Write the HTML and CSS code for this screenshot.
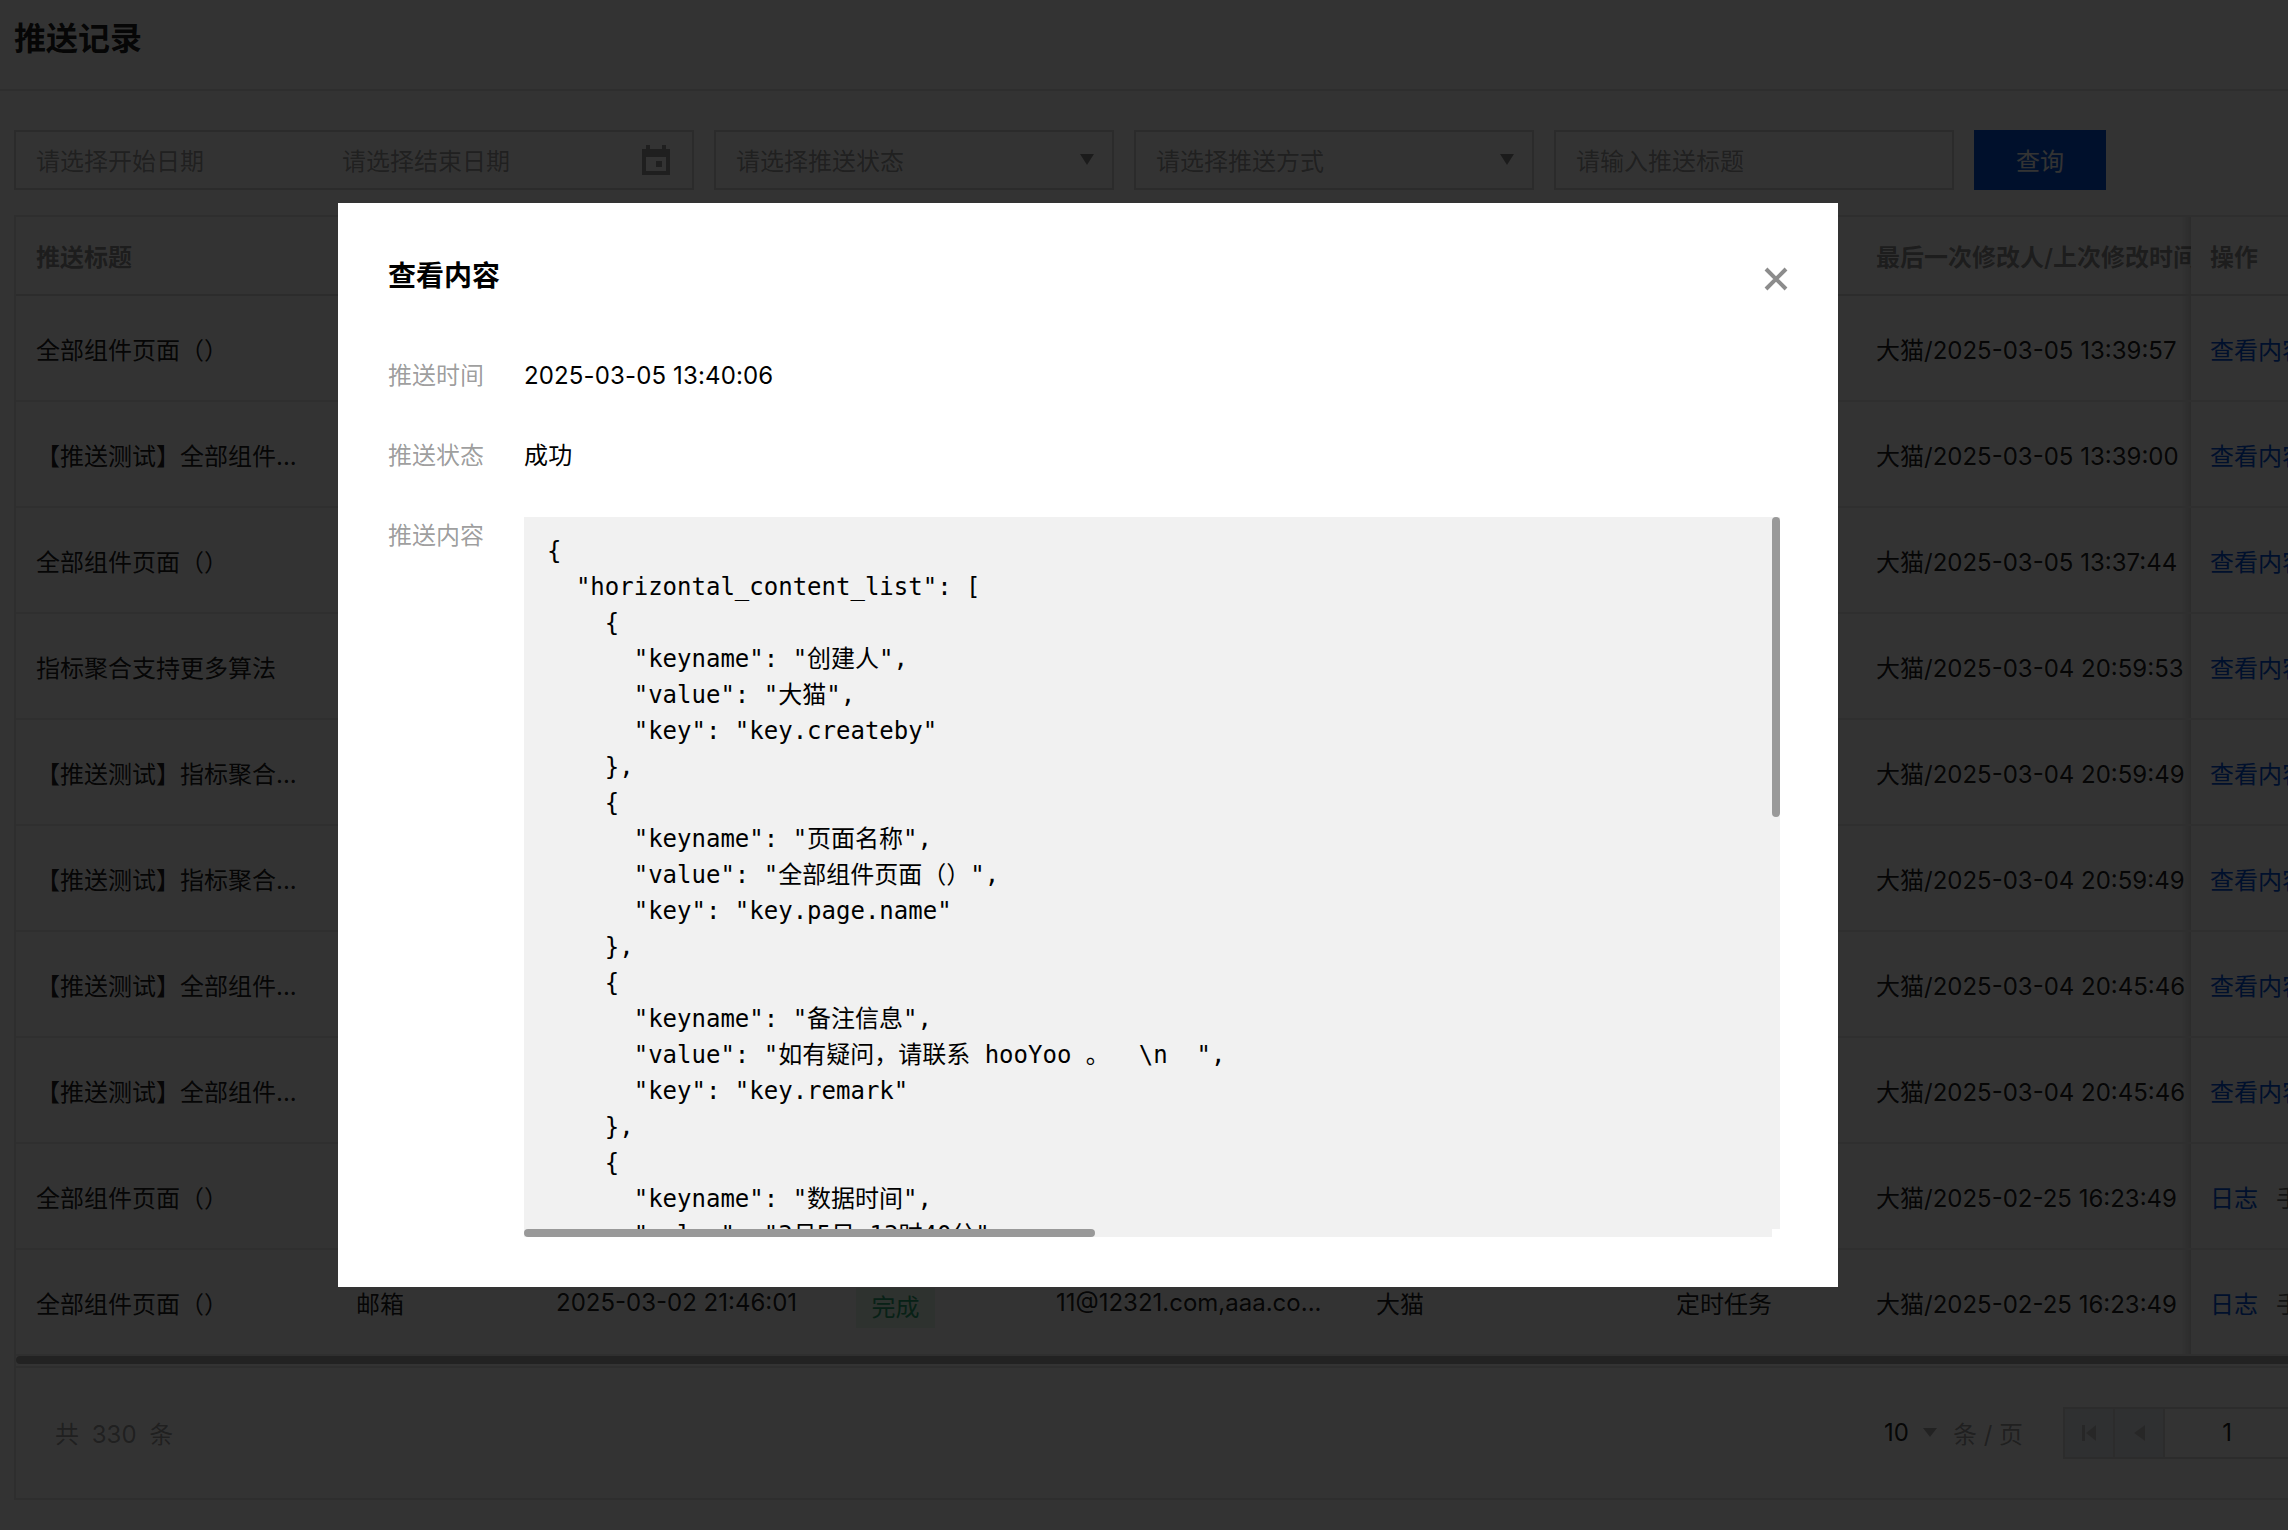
FILE: index.html
```html
<!DOCTYPE html>
<html lang="zh-CN">
<head>
<meta charset="utf-8">
<title>推送记录</title>
<link rel="stylesheet" href="styles.css">
</head>
<body>
<div class="page">
  <header class="page-head"><h1>推送记录</h1></header>
  <main class="content">
    <section class="filters">
      <div class="field range">
        <span class="ph range-a">请选择开始日期</span>
        <span class="ph range-b">请选择结束日期</span>
        <svg class="cal" viewBox="0 0 28 30" width="28" height="30"><path fill="#999" fill-rule="evenodd" d="M4 0h4v4h12V0h4v4h4v26H0V4h4zM4 12v14h20V12zM14 16h6v6h-6z"/></svg>
      </div>
      <div class="field sel"><span class="ph">请选择推送状态</span><i class="caret"></i></div>
      <div class="field sel"><span class="ph">请选择推送方式</span><i class="caret"></i></div>
      <div class="field text"><span class="ph">请输入推送标题</span></div>
      <button class="query">查询</button>
    </section>
    <section class="table-card">
      <div class="table-clip">
        <table>
          <colgroup><col class="c1"><col class="c2"><col class="c3"><col class="c4"><col class="c5"><col class="c6"><col class="c7"><col class="c8"><col class="c9"></colgroup>
          <thead>
            <tr><th>推送标题</th><th>推送方式</th><th>推送时间</th><th>推送状态</th><th>接收人</th><th>创建人</th><th>推送类型</th><th class="last-mod"><div class="clip">最后一次修改人/上次修改时间</div></th><th class="ops">操作</th></tr>
          </thead>
          <tbody>
            <tr><td>全部组件页面（）</td><td>邮箱</td><td>2025-03-05 13:40:06</td><td><span class="tag">完成</span></td><td>11@12321.com,aaa.co...</td><td>大猫</td><td>定时任务</td><td class="last-mod">大猫/2025-03-05 13:39:57</td><td class="ops"><a>查看内容</a></td></tr>
            <tr><td>【推送测试】全部组件...</td><td>邮箱</td><td>2025-03-05 13:39:00</td><td><span class="tag">完成</span></td><td>11@12321.com,aaa.co...</td><td>大猫</td><td>手动推送</td><td class="last-mod">大猫/2025-03-05 13:39:00</td><td class="ops"><a>查看内容</a></td></tr>
            <tr><td>全部组件页面（）</td><td>邮箱</td><td>2025-03-05 13:37:50</td><td><span class="tag">完成</span></td><td>11@12321.com,aaa.co...</td><td>大猫</td><td>定时任务</td><td class="last-mod">大猫/2025-03-05 13:37:44</td><td class="ops"><a>查看内容</a></td></tr>
            <tr><td>指标聚合支持更多算法</td><td>邮箱</td><td>2025-03-04 21:00:01</td><td><span class="tag">完成</span></td><td>11@12321.com,aaa.co...</td><td>大猫</td><td>定时任务</td><td class="last-mod">大猫/2025-03-04 20:59:53</td><td class="ops"><a>查看内容</a></td></tr>
            <tr><td>【推送测试】指标聚合...</td><td>邮箱</td><td>2025-03-04 20:59:49</td><td><span class="tag">完成</span></td><td>11@12321.com,aaa.co...</td><td>大猫</td><td>手动推送</td><td class="last-mod">大猫/2025-03-04 20:59:49</td><td class="ops"><a>查看内容</a></td></tr>
            <tr><td>【推送测试】指标聚合...</td><td>邮箱</td><td>2025-03-04 20:59:49</td><td><span class="tag">完成</span></td><td>11@12321.com,aaa.co...</td><td>大猫</td><td>手动推送</td><td class="last-mod">大猫/2025-03-04 20:59:49</td><td class="ops"><a>查看内容</a></td></tr>
            <tr><td>【推送测试】全部组件...</td><td>邮箱</td><td>2025-03-04 20:45:46</td><td><span class="tag">完成</span></td><td>11@12321.com,aaa.co...</td><td>大猫</td><td>手动推送</td><td class="last-mod">大猫/2025-03-04 20:45:46</td><td class="ops"><a>查看内容</a></td></tr>
            <tr><td>【推送测试】全部组件...</td><td>邮箱</td><td>2025-03-04 20:45:46</td><td><span class="tag">完成</span></td><td>11@12321.com,aaa.co...</td><td>大猫</td><td>手动推送</td><td class="last-mod">大猫/2025-03-04 20:45:46</td><td class="ops"><a>查看内容</a></td></tr>
            <tr><td>全部组件页面（）</td><td>邮箱</td><td>2025-03-03 21:46:01</td><td><span class="tag">完成</span></td><td>11@12321.com,aaa.co...</td><td>大猫</td><td>定时任务</td><td class="last-mod">大猫/2025-02-25 16:23:49</td><td class="ops"><a>日志</a><span class="muted">手动推送</span></td></tr>
            <tr><td>全部组件页面（）</td><td>邮箱</td><td>2025-03-02 21:46:01</td><td><span class="tag">完成</span></td><td>11@12321.com,aaa.co...</td><td>大猫</td><td>定时任务</td><td class="last-mod">大猫/2025-02-25 16:23:49</td><td class="ops"><a>日志</a><span class="muted">手动推送</span></td></tr>
          </tbody>
        </table>
      </div>
      <div class="hbar"></div>
      <footer class="pager">
        <span class="total">共 330 条</span>
        <div class="pager-right">
          <span class="size">10</span><i class="caret small"></i><span class="per">条 / 页</span>
          <div class="pages">
            <button class="pbtn"><svg viewBox="0 0 14 16" width="14" height="16"><path fill="#c4c4c4" d="M0 0h3v16H0zM14 0v16L4 8z"/></svg></button>
            <button class="pbtn"><svg viewBox="0 0 11 16" width="11" height="16"><path fill="#c4c4c4" d="M11 0v16L0 8z"/></svg></button>
            <span class="pnum">1</span>
          </div>
        </div>
      </footer>
    </section>
  </main>
</div>
<div class="mask"></div>
<div class="dialog">
  <div class="dialog-head">
    <h2>查看内容</h2>
    <svg class="close" viewBox="0 0 24 24" width="24" height="24"><path d="M2 2l20 20M22 2L2 22" stroke="#8c8c8c" stroke-width="4" fill="none"/></svg>
  </div>
  <div class="info-row"><span class="label">推送时间</span><span class="value">2025-03-05 13:40:06</span></div>
  <div class="info-row"><span class="label">推送状态</span><span class="value">成功</span></div>
  <div class="info-row code-row"><span class="label">推送内容</span>
    <div class="code-wrap">
<pre class="code">{
  "horizontal_content_list": [
    {
      "keyname": "创建人",
      "value": "大猫",
      "key": "key.createby"
    },
    {
      "keyname": "页面名称",
      "value": "全部组件页面（）",
      "key": "key.page.name"
    },
    {
      "keyname": "备注信息",
      "value": "如有疑问，请联系 hooYoo 。  \n  ",
      "key": "key.remark"
    },
    {
      "keyname": "数据时间",
      "value": "3月5日 13时40分"
    }
  ]
}</pre>
      <i class="thumb thumb-v"></i>
      <i class="thumb thumb-h"></i>
      <i class="corner"></i>
    </div>
  </div>
</div>
</body>
</html>
```
FILE: styles.css
```css
* { box-sizing: border-box; }
html, body { margin: 0; height: 100%; overflow: hidden; background: #fff; }
body { font-family: Inter, "Noto Sans CJK SC", sans-serif; font-size: 24px; color: rgba(0,0,0,.9); }
.page { width: 2288px; height: 1530px; overflow: hidden; }
.page-head { height: 91px; border-bottom: 2px solid #e7e7e7; padding: 0 14px; display: flex; align-items: center; }
.page-head h1 { margin: 0 0 12px; font-size: 32px; font-weight: 600; line-height: 44px; }
.content { padding: 39px 0 0 14px; }
.filters { display: flex; gap: 20px; height: 60px; }
.field { height: 60px; border: 2px solid #d8d8d8; display: flex; align-items: center; padding: 0 0 2px 20px; }
.ph { color: rgba(0,0,0,.4); }
.range { width: 680px; }
.range-a { width: 306px; }
.cal { margin: 2px 22px 0 auto; }
.sel, .text { width: 400px; }
.sel { justify-content: space-between; padding-right: 18px; }
.caret { width: 0; height: 0; border-left: 7px solid transparent; border-right: 7px solid transparent; border-top: 11px solid #888; }
.query { width: 132px; height: 60px; border: 0; background: #0052d9; color: #fff; font: inherit; padding: 0 0 2px; }
.table-card { margin-top: 25px; border-left: 2px solid #e7e7e7; }
.table-clip { width: 2272px; overflow: hidden; border-top: 2px solid #e7e7e7; }
table { border-collapse: collapse; table-layout: fixed; width: 2446px; }
.c1 { width: 320px; } .c2 { width: 200px; } .c3 { width: 300px; } .c4 { width: 200px; } .c5 { width: 320px; } .c6 { width: 300px; } .c7 { width: 200px; } .c8 { width: 335px; } .c9 { width: 271px; }
th, td { padding: 0 20px; text-align: left; white-space: nowrap; overflow: hidden; }
th { height: 78px; font-weight: 600; color: rgba(0,0,0,.45); border-bottom: 2px solid #dcdcdc; }
td { height: 106px; border-bottom: 2px solid #ececec; padding-top: 1px; }
.last-mod { padding-right: 0; background: linear-gradient(to left, rgba(0,0,0,.14), transparent 10px); }
.clip { overflow: hidden; width: 315px; }
.ops { padding-left: 19px; }
.ops a { color: #0052d9; }
.muted { color: rgba(0,0,0,.6); margin-left: 18px; }
.tag { display: inline-block; width: 79px; height: 40px; margin-top: 10px; line-height: 40px; text-align: center; background: #e3f9e9; color: #2ba471; }
.hbar { height: 8px; width: 2272px; background: #aaa; border-radius: 4px 0 0 4px; }
.pager { height: 134px; width: 2272px; margin-top: 2px; border-top: 2px solid #e7e7e7; border-bottom: 2px solid #e7e7e7; display: flex; align-items: center; justify-content: space-between; padding-left: 39px; overflow: hidden; }
.total { color: rgba(0,0,0,.4); word-spacing: 6px; margin-bottom: 1px; }
.pager-right { display: flex; align-items: center; width: 404px; flex: none; white-space: nowrap; margin-bottom: 1px; }
.size { margin-right: 14px; }
.caret.small { border-top-width: 9px; border-top-color: #aaa; flex: none; }
.per { color: rgba(0,0,0,.4); margin-left: 16px; flex: none; }
.pages { display: flex; height: 52px; margin-left: 40px; border: 2px solid #dcdcdc; flex: none; width: 300px; }
.pbtn { width: 50px; flex: none; border: 0; border-right: 2px solid #dcdcdc; background: #eceff4; padding: 0; display: flex; align-items: center; justify-content: center; }
.pnum { width: 124px; text-align: center; line-height: 48px; }
.mask { position: fixed; inset: 0; background: rgba(0,0,0,.8); }
.dialog { position: fixed; left: 338px; top: 203px; width: 1500px; height: 1084px; background: #fff; padding: 50px 58px 50px 50px; }
.dialog-head { display: flex; justify-content: space-between; align-items: flex-start; height: 105px; }
.dialog-head h2 { margin: 3px 0 0; font-size: 28px; font-weight: 600; line-height: 40px; color: #000; }
.close { margin: 14px -8px 0 0; }
.info-row { display: flex; height: 80px; align-items: flex-start; line-height: 36px; color: #000; }
.label { width: 136px; flex: none; color: rgba(0,0,0,.4); }
.value { letter-spacing: .14px; }
.code-row { height: 720px; }
.code-wrap { position: relative; width: 1256px; height: 720px; margin-top: -1px; flex: none; }
.code { margin: 0; width: 100%; height: 100%; overflow: hidden; background: #f1f1f1; padding: 16px 23px; font-family: "DejaVu Sans Mono", "Noto Sans CJK SC", monospace; font-size: 24px; line-height: 36px; color: #000; }
.thumb { position: absolute; background: #999; border-radius: 4px; }
.thumb-v { top: 0; right: 0; width: 8px; height: 300px; }
.thumb-h { left: 0; bottom: 0; width: 571px; height: 8px; }
.corner { position: absolute; right: 0; bottom: 0; width: 8px; height: 8px; background: #fff; }
```
